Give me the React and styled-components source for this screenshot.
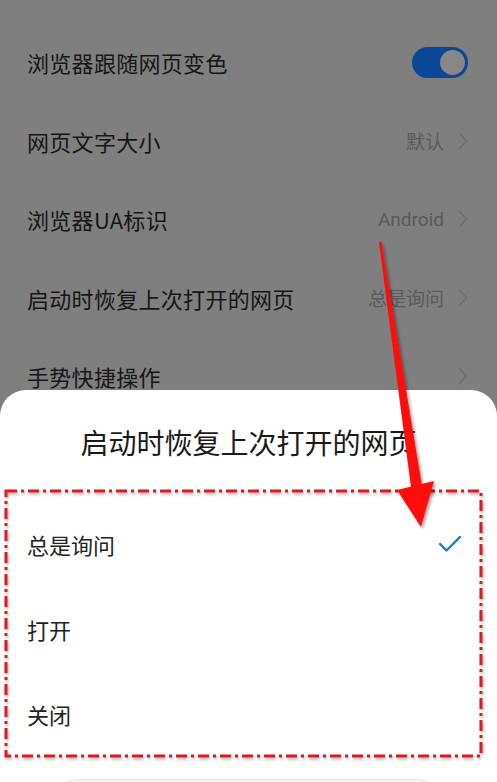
import styled, { createGlobalStyle } from 'styled-components';

const GlobalStyle = createGlobalStyle`
  html, body {
    margin: 0;
    padding: 0;
    background: #7f7f7f;
  }
  body {
    font-family: "Noto Sans CJK SC", "Noto Sans", sans-serif;
  }
`;

const Screen = styled.div`
  position: relative;
  width: 497px;
  height: 782px;
  overflow: hidden;
  background: #7f7f7f;
`;

const SettingsList = styled.div`
  display: flex;
  flex-direction: column;
  padding-top: 23px;
`;

const Row = styled.div`
  height: 78.5px;
  display: flex;
  align-items: center;
  justify-content: space-between;
  padding: 0 29px 0 27px;
`;

const Label = styled.span`
  font-size: 22px;
  color: #161616;
  letter-spacing: 0.3px;
`;

const Trailing = styled.div`
  display: flex;
  align-items: center;
  gap: 14px;
`;

const Value = styled.span`
  font-size: 19px;
  color: #595959;
  font-family: ${(p) => (p.latin ? '"Roboto", "Noto Sans", sans-serif' : 'inherit')};
`;

const Toggle = styled.div`
  width: 56px;
  height: 31px;
  border-radius: 16px;
  background: #0a4796;
  display: flex;
  align-items: center;
  justify-content: flex-end;
  padding: 0 3px;
  box-sizing: border-box;
`;

const Knob = styled.div`
  width: 25px;
  height: 25px;
  border-radius: 50%;
  background: #878787;
`;

const Sheet = styled.div`
  position: absolute;
  left: 0;
  right: 0;
  top: 390px;
  bottom: -40px;
  background: #ffffff;
  border-radius: 26px 26px 0 0;
  display: flex;
  flex-direction: column;
`;

const SheetTitle = styled.h2`
  margin: 36px 0 0;
  height: 32px;
  line-height: 32px;
  text-align: center;
  font-size: 28px;
  font-weight: 400;
  color: #1a1a1a;
`;

const Options = styled.div`
  position: relative;
  margin: 33px 16px 0 6px;
  padding-top: 10px;
  display: flex;
  flex-direction: column;
`;

const Option = styled.div`
  height: 85px;
  display: flex;
  align-items: center;
  justify-content: space-between;
  padding: 0 19px 0 21px;
`;

const OptionText = styled.span`
  font-size: 22px;
  color: #222;
`;

const Frame = styled.svg`
  position: absolute;
  left: -3px;
  top: -3px;
  width: calc(100% + 6px);
  height: calc(100% + 6px);
  pointer-events: none;
  overflow: visible;
`;

const CancelBar = styled.div`
  margin: 23px 57px 0 55px;
  height: 50px;
  border-radius: 24px;
  background: #f4f4f4;
  border-top: 1px solid #e6e6e6;
`;

const Annotation = styled.svg`
  position: absolute;
  left: 0;
  top: 0;
  width: 497px;
  height: 782px;
  pointer-events: none;
`;

const Chevron = () => (
  <svg width="10" height="18" viewBox="0 0 10 18">
    <path d="M1.5 1.5 L8.5 9 L1.5 16.5" fill="none" stroke="#6e6e6e" strokeWidth="1.6" strokeLinecap="round" strokeLinejoin="round" />
  </svg>
);

const Check = () => (
  <svg width="24" height="18" viewBox="0 0 24 18">
    <path d="M2 9 L8.5 15.5 L22 2" fill="none" stroke="#1f74d6" strokeWidth="2.4" strokeLinecap="round" strokeLinejoin="round" />
  </svg>
);

const settings = [
  { label: '浏览器跟随网页变色', toggle: true },
  { label: '网页文字大小', value: '默认' },
  { label: '浏览器UA标识', value: 'Android', latin: true },
  { label: '启动时恢复上次打开的网页', value: '总是询问' },
  { label: '手势快捷操作', value: '' },
];

const options = ['总是询问', '打开', '关闭'];

export default function App() {
  return (
    <Screen>
      <GlobalStyle />
      <SettingsList>
        {settings.map((s) => (
          <Row key={s.label}>
            <Label>{s.label}</Label>
            {s.toggle ? (
              <Toggle>
                <Knob />
              </Toggle>
            ) : (
              <Trailing>
                {s.value && <Value latin={s.latin}>{s.value}</Value>}
                <Chevron />
              </Trailing>
            )}
          </Row>
        ))}
      </SettingsList>

      <Sheet>
        <SheetTitle>启动时恢复上次打开的网页</SheetTitle>
        <Options>
          {options.map((o, i) => (
            <Option key={o}>
              <OptionText>{o}</OptionText>
              {i === 0 && <Check />}
            </Option>
          ))}
          <Frame>
            <defs>
              <filter id="fs" x="-5%" y="-5%" width="110%" height="110%">
                <feDropShadow dx="1" dy="2" stdDeviation="1.5" floodColor="#000" floodOpacity="0.3" />
              </filter>
            </defs>
            <rect
              x="3"
              y="3"
              style={{ width: 'calc(100% - 6px)', height: 'calc(100% - 6px)' }}
              fill="none"
              stroke="#dc1a1f"
              strokeWidth="3"
              strokeDasharray="11 4 3 4"
              filter="url(#fs)"
            />
          </Frame>
        </Options>
        <CancelBar />
      </Sheet>

      <Annotation viewBox="0 0 497 782">
        <defs>
          <filter id="as" x="-20%" y="-5%" width="140%" height="110%">
            <feDropShadow dx="2" dy="2" stdDeviation="1.5" floodColor="#000" floodOpacity="0.35" />
          </filter>
        </defs>
        <g filter="url(#as)" fill="#ff0a0a">
          <polygon points="379,242 381.5,242 422,486 411,487" />
          <polygon points="397,490 434,481 421,527" />
        </g>
      </Annotation>
    </Screen>
  );
}
